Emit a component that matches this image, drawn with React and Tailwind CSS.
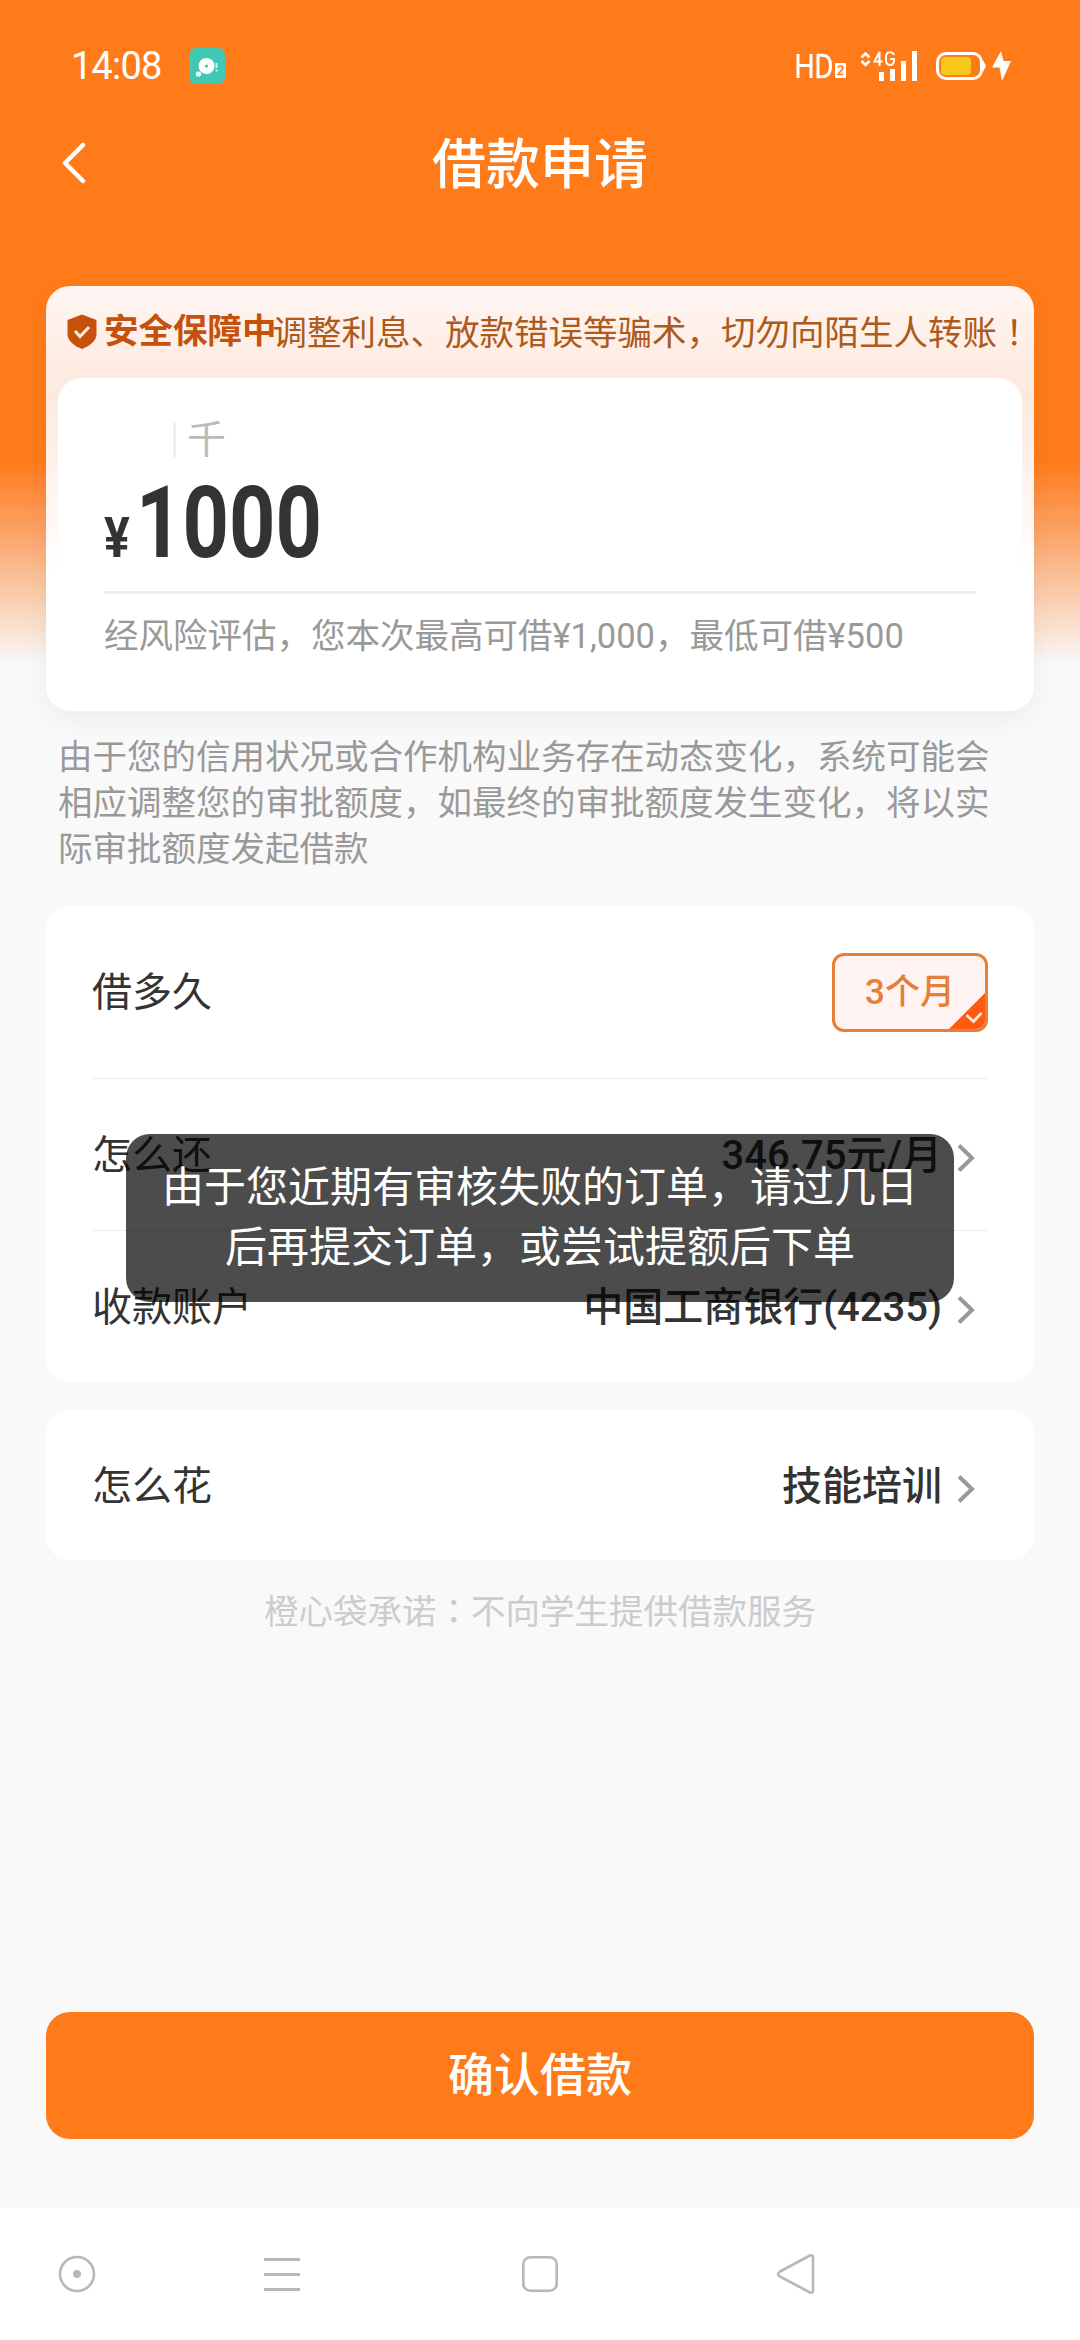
import React from 'react';

const StatusBar = () => (
  <div className="flex h-[84px] items-end justify-between pl-[71px] pr-[68px]">
    <div className="flex items-center gap-[27px]">
      <span className="text-[38px] leading-[36px] tracking-[-0.8px] text-white">14:08</span>
      <svg width="36" height="36" viewBox="0 0 36 36">
        <rect width="36" height="36" rx="7" fill="#40c8b2" />
        <circle cx="17.5" cy="18" r="8" fill="#fff" />
        <circle cx="17.5" cy="18" r="1.6" fill="#40c8b2" />
        <circle cx="9.5" cy="26" r="2.6" fill="#fff" />
        <path d="M27.5 15v5M27.5 21.5v2" stroke="#d9f5ef" strokeWidth="1.8" />
      </svg>
    </div>
    <svg width="216" height="36" viewBox="0 0 216 36" fill="none">
      <path d="M2 6v24M15 6v24M2 17.5h13" stroke="#fff" strokeWidth="3" />
      <path d="M22 7.3v21.4h4c6 0 8.5-4 8.5-10.7S32 7.3 26 7.3z" stroke="#fff" strokeWidth="3" />
      <rect x="39" y="15" width="11" height="15" rx="1" fill="#fff" />
      <path d="M42 19.5c.5-2 5-2 5 .5 0 2-4 4-5 6.5h5" stroke="#ff7b1a" strokeWidth="1.6" />
      <path d="M65.5 9.5l4-4 4 4M65.5 13l4 4 4-4" stroke="#fff" strokeWidth="2.6" />
      <path d="M83.500 18V4L78.500 13.500h8" stroke="#fff" strokeWidth="2" />
      <path d="M98 7c-1-4-8-4-8 2v3c0 6.500 8 6.500 8 1v-2h-4" stroke="#fff" strokeWidth="2" />
      <path d="M83 24h5v9h-5zM94 21h5v12h-5zM105 13h5v20h-5zM116 3h5v30h-5z" fill="#fff" />
      <rect x="141.5" y="5.5" width="44" height="25" rx="8.5" stroke="#fff" strokeWidth="3" />
      <path d="M187 12l3 6-3 6z" fill="#fff" />
      <rect x="145" y="9" width="30" height="18" rx="4" fill="#f7c81c" />
      <path d="M205 3l-9 16.5h7.5L206 33l9-20h-7.5z" fill="#fff" />
    </svg>
  </div>
);

const Header = () => (
  <div className="grid h-[160px] grid-cols-3 items-center px-[62px]">
    <svg width="24" height="42" viewBox="0 0 24 42" fill="none" className="-mt-0.5">
      <path d="M21 3L3 21l18 18" stroke="#fff" strokeWidth="4.5" strokeLinecap="round" strokeLinejoin="round" />
    </svg>
    <h1 className="pt-0.5 text-center text-[54px] font-medium text-white">借款申请</h1>
  </div>
);

const Chevron = () => (
  <svg width="18" height="30" viewBox="0 0 18 30" fill="none" className="mt-1.5">
    <path d="M2 2.5l13 12.5-13 12.5" stroke="#999" strokeWidth="4" />
  </svg>
);

const Row = ({ label, value }) => (
  <div className="flex h-[151px] items-center justify-between pr-[13px]">
    <span className="pt-[3px]">{label}</span>
    <div className="flex items-center gap-[15px]">
      <span className="pt-[3px] font-medium">{value}</span>
      <Chevron />
    </div>
  </div>
);

const AmountCard = () => (
  <div className="mx-[46px] mt-[42px] h-[425px] rounded-[24px] bg-white bg-[linear-gradient(#fff5f3_0px,#feece2_80px,#fdeadd_110px,#fff_290px)] px-3 shadow-[0_8px_24px_rgba(0,0,0,0.05)]">
    <div className="flex h-[92px] items-center text-[34.5px] whitespace-nowrap text-[#ad5a1c]">
      <svg width="30" height="36" viewBox="0 0 30 36" className="ml-[9px] shrink-0">
        <path d="M15 0.5L29.5 6v14c0 7-7 12-14.5 15C7.5 32 .5 27 .5 20V6z" fill="#c4520c" />
        <path d="M8 17l5 5.5 9-9.5" fill="none" stroke="#ffe9dc" strokeWidth="3" />
      </svg>
      <span className="ml-[7px] font-bold text-[#c4520c]">安全保障中</span>
      <span className="ml-[-4px]">
        调整利息、放款错误等骗术，切勿向陌生人转账
        <span className="font-['Noto_Sans_CJK_TC']">！</span>
      </span>
    </div>
    <div className="h-[333px] rounded-[24px] bg-white px-[46px] pt-[42px]">
      <div className="ml-[69px] flex h-[40px] items-center gap-[11px]">
        <i className="h-[34px] w-[3px] bg-[#eee]" />
        <span className="text-[39px] leading-[40px] text-[#bbb]">千</span>
      </div>
      <div className="mt-[18px] flex h-[90px] items-baseline text-[#333]">
        <span className="w-[32px] origin-left scale-x-[0.86] text-[56px] leading-[90px] font-bold">¥</span>
        <span className="origin-left scale-x-[0.81] text-[100px] leading-[90px] font-bold">1000</span>
      </div>
      <div className="mt-[23px] h-[3px] bg-[#ececec]" />
      <p className="mt-[17px] text-[34.5px] leading-[50px] whitespace-nowrap text-[#999]">
        经风险评估，您本次最高可借¥1,000，最低可借¥500
      </p>
    </div>
  </div>
);

const TermBadge = () => (
  <div className="relative flex h-[79px] w-[156px] items-center justify-center overflow-hidden rounded-[12px] border-3 border-[#e5803a] bg-[#fff4f1] text-[35px] font-medium text-[#e5803a]">
    <span className="pt-0.5">3个月</span>
    <svg width="38" height="38" viewBox="0 0 38 38" className="absolute -right-px -bottom-px">
      <path d="M38 0v38H0z" fill="#ff5a10" />
      <path d="M18.5 23l7 6.5 8-8.500" fill="none" stroke="#ffe9dc" strokeWidth="2.8" />
    </svg>
  </div>
);

const Toast = () => (
  <div className="absolute top-[1134px] left-[126px] w-[828px] rounded-[24px] bg-black/70 py-6 text-center text-[42px] leading-[60px] text-white">
    由于您近期有审核失败的订单，请过几日
    <br />
    后再提交订单，或尝试提额后下单
  </div>
);

const NavBar = () => (
  <div className="flex h-[132px] items-center bg-white pl-[58px]">
    <svg width="38" height="38" viewBox="0 0 38 38" fill="none" stroke="#b8b8b8" strokeWidth="2.6">
      <circle cx="19" cy="19" r="17" />
      <circle cx="19" cy="19" r="4" fill="#b8b8b8" stroke="none" />
    </svg>
    <svg width="36" height="38" viewBox="0 0 36 38" stroke="#b8b8b8" strokeWidth="2.8" className="ml-[168px]">
      <path d="M0 4.5h36M0 19.5h36M0 34.5h36" />
    </svg>
    <svg width="38" height="38" viewBox="0 0 38 38" fill="none" stroke="#b8b8b8" strokeWidth="2.6" className="ml-[221px]">
      <rect x="2.3" y="2.3" width="33.4" height="33.4" rx="7" />
    </svg>
    <svg width="40" height="42" viewBox="0 0 40 42" fill="none" stroke="#b8b8b8" strokeWidth="2.6" className="ml-[217px]">
      <path d="M34 2.5L4 18.5q-4 2.500 0 5l30 16q3 1 3-2V4.500q0-3-3-2z" />
    </svg>
  </div>
);

const App = () => (
  <div className="relative flex h-[2340px] w-[1080px] flex-col bg-[#f9f9f9] bg-[linear-gradient(#ff7b1a_0px,#ff7b1a_460px,#fba264_530px,#f9f9f9_665px)] font-['Roboto','Noto_Sans_CJK_SC',sans-serif] text-[#333]">
    <StatusBar />
    <Header />
    <AmountCard />
    <p className="mt-[23px] ml-[58px] w-[964px] text-[34.5px] leading-[46px] text-[#999]">
      由于您的信用状况或合作机构业务存在动态变化，系统可能会相应调整您的审批额度，如最终的审批额度发生变化，将以实际审批额度发起借款
    </p>

    <div className="mx-[46px] mt-[34px] h-[476px] rounded-[24px] bg-white px-[46px] text-[40px]">
      <div className="flex h-[173px] items-center justify-between border-b border-[#ececec]">
        <span className="pt-0.5">借多久</span>
        <TermBadge />
      </div>
      <Row label="怎么还" value="346.75元/月" />
      <div className="h-px bg-[#ececec]" />
      <Row label="收款账户" value="中国工商银行(4235)" />
    </div>

    <div className="mx-[46px] mt-7 h-[150px] rounded-[24px] bg-white px-[46px] text-[40px]">
      <Row label="怎么花" value="技能培训" />
    </div>

    <p className="mt-6 text-center text-[34.5px] leading-[50px] text-[#ccc]">
      橙心袋承诺<span className="font-['Noto_Sans_CJK_TC']">：</span>不向学生提供借款服务
    </p>

    <button className="mx-[46px] mt-auto mb-[69px] h-[127px] shrink-0 rounded-[24px] bg-[#ff7b1a] text-[46px] font-medium text-white">
      确认借款
    </button>
    <NavBar />
    <Toast />
  </div>
);

export default App;
